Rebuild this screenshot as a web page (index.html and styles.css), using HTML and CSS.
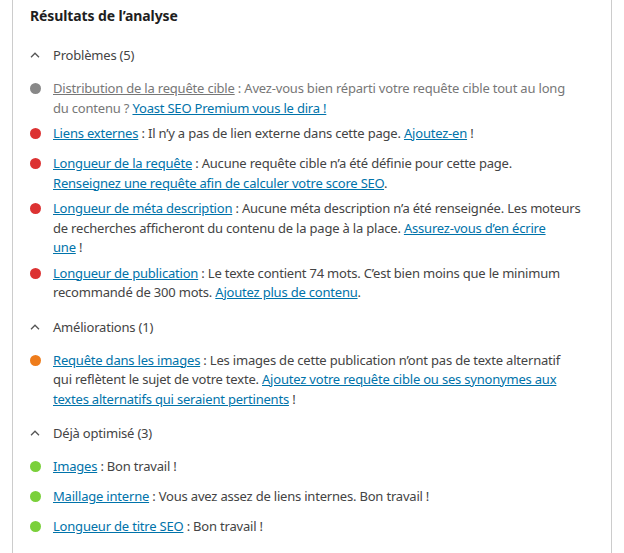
FILE: index.html
```html
<!DOCTYPE html>
<html lang="fr">
<head>
<meta charset="utf-8">
<title>Résultats de l'analyse</title>
<link rel="stylesheet" href="styles.css">
</head>
<body>
<div class="panel">
  <h2 class="title">Résultats de l’analyse</h2>

  <section class="group">
    <div class="group-head">
      <svg class="chev" viewBox="0 0 10 6" width="10" height="6"><path d="M1 5.2 L5 1.2 L9 5.2" fill="none" stroke="#555" stroke-width="1.3"/></svg>
      <span>Problèmes (5)</span>
    </div>
    <ul class="results">
      <li class="item muted"><span class="dot gray"></span><p><a href="#" class="mlink">Distribution de la requête cible</a> : Avez-vous bien réparti votre requête cible tout au long<br>du contenu ? <a href="#">Yoast SEO Premium vous le dira !</a></p></li>
      <li class="item"><span class="dot red"></span><p><a href="#">Liens externes</a> : Il n’y a pas de lien externe dans cette page. <a href="#">Ajoutez-en</a> !</p></li>
      <li class="item"><span class="dot red"></span><p><a href="#">Longueur de la requête</a> : Aucune requête cible n’a été définie pour cette page.<br><a href="#">Renseignez une requête afin de calculer votre score SEO</a>.</p></li>
      <li class="item"><span class="dot red"></span><p><a href="#">Longueur de méta description</a> : Aucune méta description n’a été renseignée. Les moteurs<br>de recherches afficheront du contenu de la page à la place. <a href="#">Assurez-vous d’en écrire<br>une</a> !</p></li>
      <li class="item"><span class="dot red"></span><p><a href="#">Longueur de publication</a> : Le texte contient 74 mots. C’est bien moins que le minimum<br>recommandé de 300 mots. <a href="#">Ajoutez plus de contenu</a>.</p></li>
    </ul>
  </section>

  <section class="group">
    <div class="group-head">
      <svg class="chev" viewBox="0 0 10 6" width="10" height="6"><path d="M1 5.2 L5 1.2 L9 5.2" fill="none" stroke="#555" stroke-width="1.3"/></svg>
      <span>Améliorations (1)</span>
    </div>
    <ul class="results">
      <li class="item"><span class="dot orange"></span><p><a href="#">Requête dans les images</a> : Les images de cette publication n’ont pas de texte alternatif<br>qui reflètent le sujet de votre texte. <a href="#">Ajoutez votre requête cible ou ses synonymes aux<br>textes alternatifs qui seraient pertinents</a> !</p></li>
    </ul>
  </section>

  <section class="group">
    <div class="group-head">
      <svg class="chev" viewBox="0 0 10 6" width="10" height="6"><path d="M1 5.2 L5 1.2 L9 5.2" fill="none" stroke="#555" stroke-width="1.3"/></svg>
      <span>Déjà optimisé (3)</span>
    </div>
    <ul class="results">
      <li class="item"><span class="dot green"></span><p><a href="#">Images</a> : Bon travail !</p></li>
      <li class="item"><span class="dot green"></span><p><a href="#">Maillage interne</a> : Vous avez assez de liens internes. Bon travail !</p></li>
      <li class="item"><span class="dot green"></span><p><a href="#">Longueur de titre SEO</a> : Bon travail !</p></li>
    </ul>
  </section>
</div>
</body>
</html>
```

FILE: styles.css
```css
html, body {
  margin: 0;
  padding: 0;
  background: #fff;
}
body {
  font-family: "Noto Sans", "Open Sans", sans-serif;
  font-size: 13px;
  letter-spacing: -0.2px;
  color: #444;
}
.panel {
  margin-left: 12px;
  width: 600px;
  min-height: 553px;
  box-sizing: border-box;
  border-left: 1px solid #ccc;
  border-right: 1px solid #ccc;
  padding: 6px 0 0 17px;
}
.title {
  margin: 0 0 11px;
  font-size: 14px;
  font-weight: 700;
  line-height: 20px;
  letter-spacing: -0.1px;
  color: #1e1e1e;
}
.group {
  margin-bottom: 1px;
}
.group-head {
  height: 36px;
  display: flex;
  align-items: center;
}
.chev {
  width: 10px;
  margin-right: 13px;
  flex: none;
}
.results {
  list-style: none;
  margin: 6px 0 0;
  padding: 0;
}
.item {
  display: flex;
  align-items: flex-start;
  min-height: 24px;
  margin-bottom: 6px;
}
.item p {
  margin: 0;
  width: 540px;
  line-height: 19.5px;
}
.dot {
  flex: none;
  width: 11px;
  height: 11px;
  border-radius: 50%;
  margin: 4px 12px 0 0;
}
.gray { background: #888; }
.red { background: #dc3232; }
.orange { background: #ee7c1b; }
.green { background: #7ad03a; }
a {
  color: #0073aa;
  text-decoration: underline;
}
.muted p {
  color: #777;
}
.muted a.mlink {
  color: #777;
}
```
